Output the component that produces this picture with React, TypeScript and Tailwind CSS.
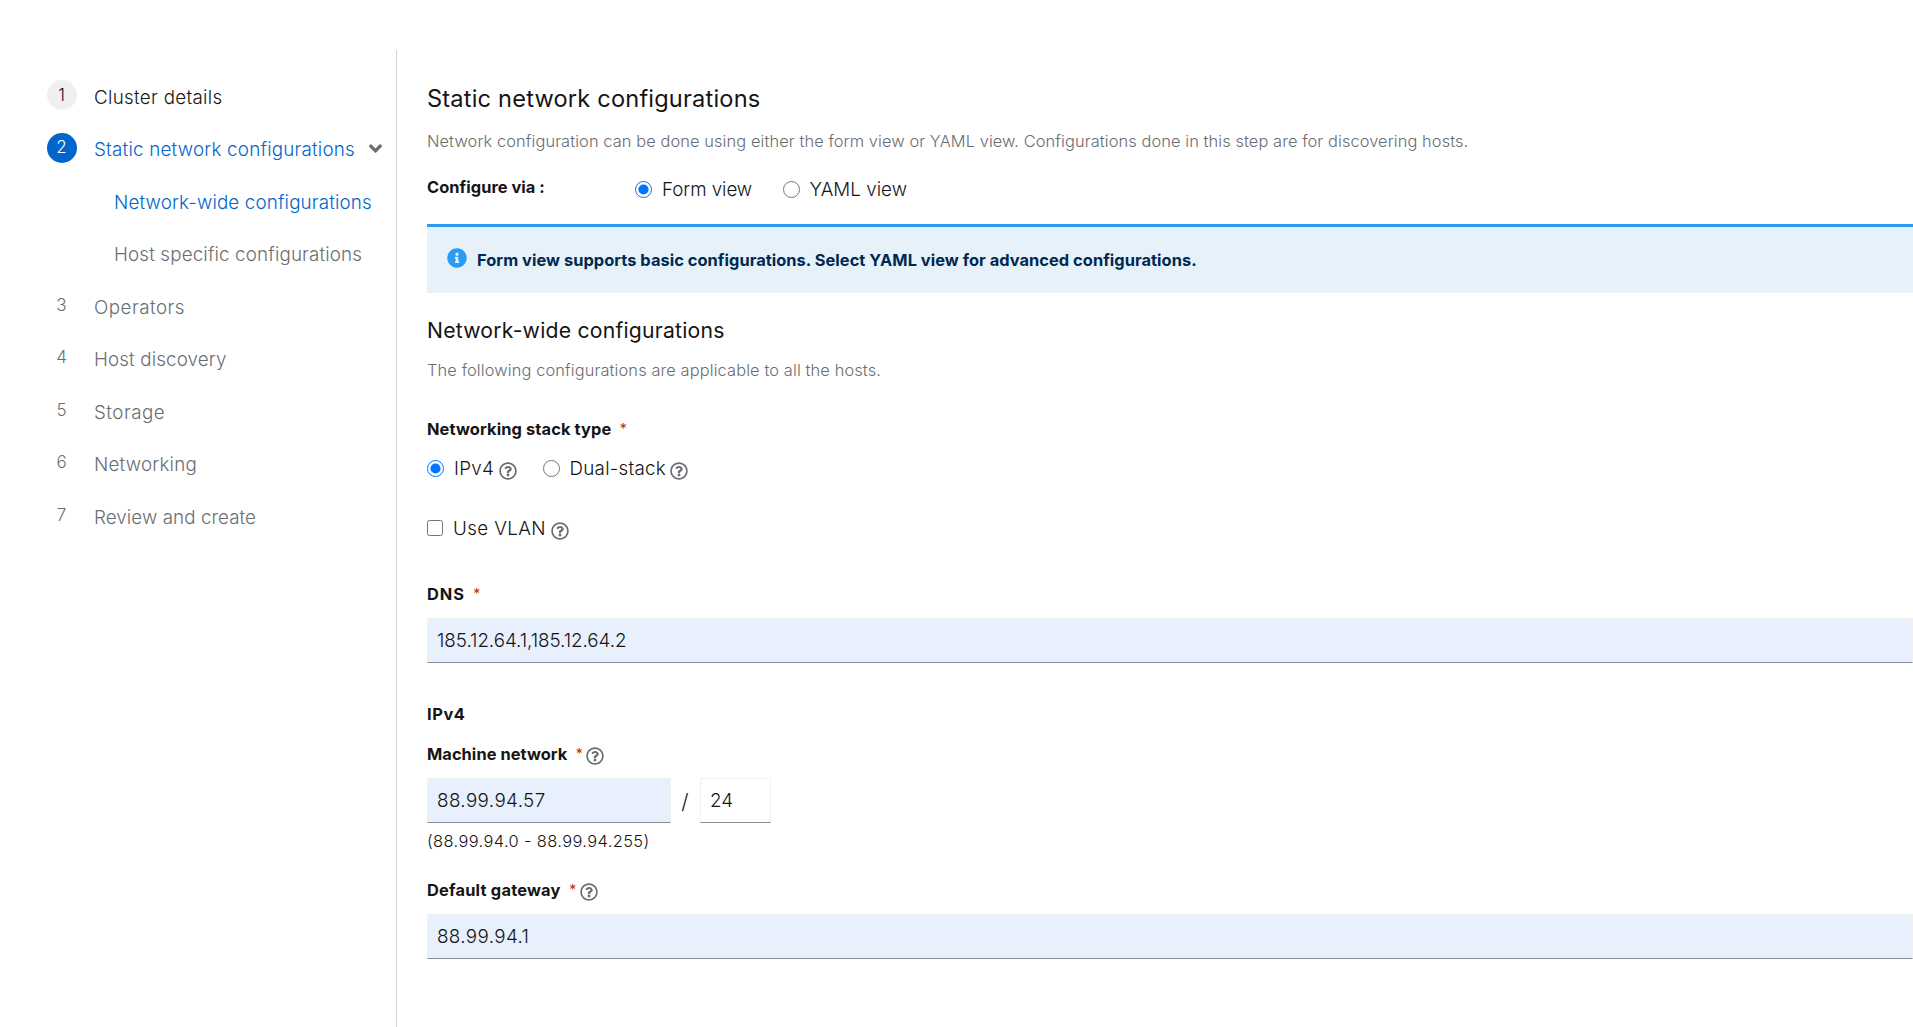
import React from 'react';
import { FaAngleDown, FaInfoCircle, FaRegQuestionCircle } from 'react-icons/fa';

type Tone = 'done' | 'current' | 'future';

const toneClass: Record<Tone, string> = {
  done: 'text-[#151515]',
  current: 'text-[#0066cc]',
  future: 'text-[#6a6e73]',
};

const badgeClass: Record<Tone, string> = {
  done: 'bg-[#f0f0f0] text-[#151515]',
  current: 'bg-[#0066cc] text-white',
  future: 'text-[#6a6e73]',
};

function Step({ n, label, tone, track, open }: { n: number; label: string; tone: Tone; track: string; open?: boolean }) {
  return (
    <li className="mb-[22.5px] flex h-[30px] items-start">
      <span className={`flex size-[30px] shrink-0 items-center justify-center rounded-full pt-px pr-px text-[17px] font-light ${badgeClass[tone]}`}>{n}</span>
      <span className={`mt-[2.5px] ml-[17px] leading-[30px] whitespace-nowrap ${toneClass[tone]} ${track}`}>{label}</span>
      {open && <FaAngleDown className="mt-[5px] ml-auto mr-[10px] size-[21px] text-[#6a6e73]" />}
    </li>
  );
}

function SubStep({ label, tone, track }: { label: string; tone: Tone; track: string }) {
  return (
    <li className={`mb-[22.5px] h-[30px] pt-[2.5px] pl-[67px] leading-[30px] whitespace-nowrap ${toneClass[tone]} ${track}`}>
      <span>{label}</span>
    </li>
  );
}

function Help({ className }: { className: string }) {
  return <FaRegQuestionCircle className={`size-[18px] shrink-0 text-[#6a6e73] ${className}`} />;
}

function FieldLabel({ text, track, required, help, className }: { text: string; track: string; required?: boolean; help?: boolean; className: string }) {
  return (
    <div className={`flex h-[24px] items-start leading-[24px] ${className}`}>
      <span className={`text-[16.4px] font-bold ${track}`}>{text}</span>
      {required && <span className="ml-[8.5px] text-[14px] font-normal text-[#c9190b]">*</span>}
      {help && <Help className="mt-[5px] ml-[3.5px]" />}
    </div>
  );
}

function Option({ name, label, track, checked, help, className }: { name: string; label: string; track: string; checked?: boolean; help?: boolean; className: string }) {
  return (
    <label className={`flex h-[28px] items-start leading-[28px] ${className}`}>
      <input type="radio" name={name} defaultChecked={checked} className="mt-[5.5px] size-[17px]" />
      <span className={`mt-[0.5px] ml-[10px] whitespace-nowrap ${track}`}>{label}</span>
      {help && <Help className="mt-[8px] ml-[4.5px]" />}
    </label>
  );
}

function Field({ value, track, className }: { value: string; track: string; className: string }) {
  return (
    <div className={`h-[45px] border border-[#f0f0f0] border-b-[#8a8d90] pl-[9px] leading-[43px] text-[#151515] ${className}`}>
      <span className={track}>{value}</span>
    </div>
  );
}

export default function App() {
  return (
    <div className="flex h-[1027px] w-full overflow-hidden bg-white pt-[50px] font-['Inter',sans-serif] text-[18.8px] font-light text-[#151515]">
      <nav className="h-full w-[397px] shrink-0 border-r border-[#d2d2d2] pt-[30px] pl-[47px]">
        <ol>
          <Step n={1} label="Cluster details" tone="done" track="tracking-[0.308px]" />
          <Step n={2} label="Static network configurations" tone="current" track="tracking-[0.218px]" open />
          <SubStep label="Network-wide configurations" tone="current" track="tracking-[0.15px]" />
          <SubStep label="Host specific configurations" tone="future" track="tracking-[0.15px]" />
          <Step n={3} label="Operators" tone="future" track="tracking-[0.5px]" />
          <Step n={4} label="Host discovery" tone="future" track="tracking-[0.127px]" />
          <Step n={5} label="Storage" tone="future" track="tracking-[0.5px]" />
          <Step n={6} label="Networking" tone="future" track="tracking-[0.216px]" />
          <Step n={7} label="Review and create" tone="future" track="tracking-[0.073px]" />
        </ol>
      </nav>
      <main className="min-w-0 flex-1 pt-[34px] pl-[30px]">
        <h1 className="h-[30px] text-[23.6px] leading-[30px] font-normal tracking-[0.19px]">Static network configurations</h1>
        <p className="mt-[14.5px] h-[24px] text-[16.4px] leading-[24px] tracking-[0.09px] whitespace-nowrap text-[#6a6e73]">Network configuration can be done using either the form view or YAML view. Configurations done in this step are for discovering hosts.</p>
        <div className="mt-[22.5px] flex h-[28px] items-start">
          <span className="w-[208px] text-[16.4px] leading-[24px] font-bold tracking-[0.05px]">Configure via :</span>
          <Option name="view" label="Form view" track="tracking-[-0.07px]" checked className="w-[147.5px]" />
          <Option name="view" label="YAML view" track="tracking-[0.028px]" className="" />
        </div>
        <div className="mt-[21px] flex h-[69px] items-start border-t-[3px] border-[#2b9af3] bg-[#e7f1fa] pt-[21px] pl-[20px]">
          <FaInfoCircle className="size-[20px] text-[#2b9af3]" />
          <span className="ml-[10px] text-[16.4px] leading-[24px] font-bold tracking-[0.045px] whitespace-nowrap text-[#002952]">Form view supports basic configurations. Select YAML view for advanced configurations.</span>
        </div>
        <h2 className="mt-[23px] h-[28px] text-[21.2px] leading-[28px] font-normal tracking-[0.21px]">Network-wide configurations</h2>
        <p className="mt-[14px] h-[24px] text-[16.4px] leading-[24px] tracking-[0.115px] whitespace-nowrap text-[#6a6e73]">The following configurations are applicable to all the hosts.</p>
        <FieldLabel text="Networking stack type" track="tracking-[0.12px]" required className="mt-[34.5px]" />
        <div className="mt-[13.5px] flex">
          <Option name="stack" label="IPv4" track="tracking-[0.3px]" checked help className="w-[115.5px]" />
          <Option name="stack" label="Dual-stack" track="tracking-[0.25px]" help className="" />
        </div>
        <label className="mt-[32px] flex h-[28px] items-start leading-[28px]">
          <input type="checkbox" className="mt-[5.5px] size-[16px]" />
          <span className="mt-[0.5px] ml-[10px] tracking-[0.395px]">Use VLAN</span>
          <Help className="mt-[8px] ml-[4.5px]" />
        </label>
        <FieldLabel text="DNS" track="tracking-[0.9px]" required className="mt-[39.5px]" />
        <Field value="185.12.64.1,185.12.64.2" track="tracking-[-0.04px]" className="mt-[12.5px] bg-[#e8f0fe]" />
        <FieldLabel text="IPv4" track="tracking-[0.6px]" className="mt-[38.5px]" />
        <FieldLabel text="Machine network" track="tracking-[0.06px]" required help className="mt-[16px]" />
        <div className="mt-[12.5px] flex">
          <Field value="88.99.94.57" track="tracking-[0.4px]" className="w-[244px] bg-[#e8f0fe]" />
          <span className="w-[29px] pt-[1px] pr-px text-center text-[21px] leading-[45px]">/</span>
          <Field value="24" track="" className="w-[71px]" />
        </div>
        <p className="mt-[5px] h-[24px] text-[16.4px] leading-[24px] tracking-[0.398px]">(88.99.94.0 - 88.99.94.255)</p>
        <FieldLabel text="Default gateway" track="tracking-[0.22px]" required help className="mt-[24.5px]" />
        <Field value="88.99.94.1" track="tracking-[0.38px]" className="mt-[12px] bg-[#e8f0fe]" />
      </main>
    </div>
  );
}
